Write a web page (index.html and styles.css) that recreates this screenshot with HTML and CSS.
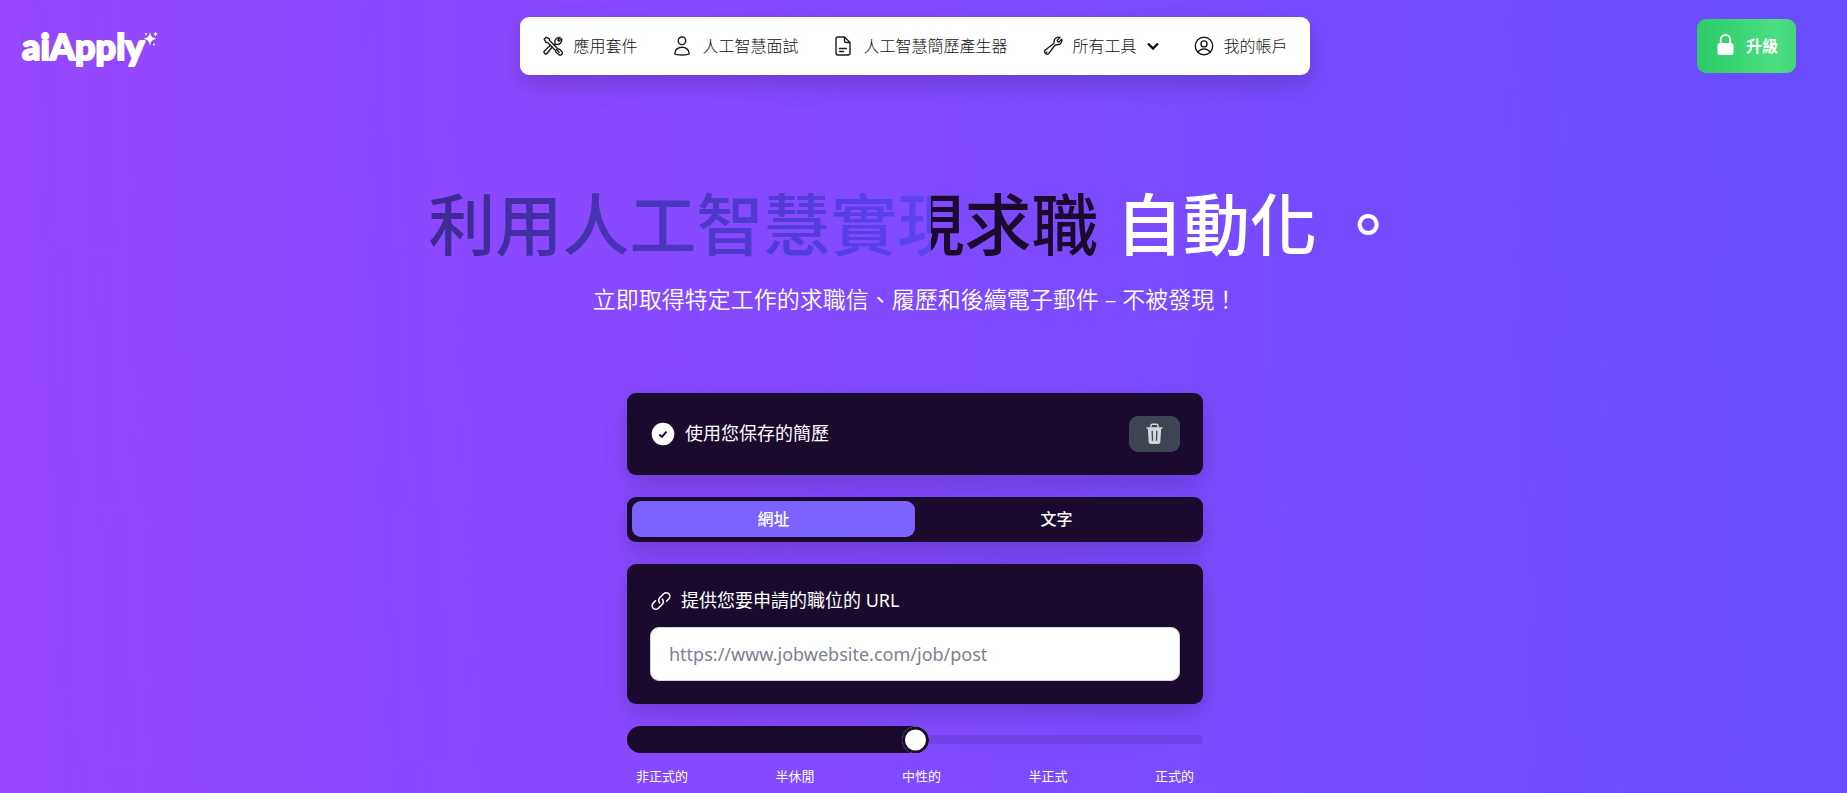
FILE: index.html
```html
<!DOCTYPE html>
<html lang="zh-Hant">
<head>
<meta charset="utf-8">
<meta name="viewport" content="width=device-width, initial-scale=1">
<title>aiApply</title>
<link rel="stylesheet" href="styles.css">
</head>
<body>
<div class="page">
  <header class="topbar">
    <a class="logo" href="#" aria-label="aiApply">
      <svg width="140" height="54" viewBox="0 0 140 54">
        <text class="logo-text" x="2" y="41">aiApply</text>
        <g fill="#fff">
          <path d="M130 13c.8 4.200 2 5.600 6.500 6.700-4.500 1.100-5.700 2.600-6.500 7.300-.8-4.700-2-6.200-6.500-7.300 4.500-1.100 5.700-2.500 6.500-6.700z"/>
          <path d="M135.500 12.500l.8 1.700 1.700.8-1.700.8-.8 1.700-.8-1.700-1.700-.8 1.700-.8z"/>
          <circle cx="126" cy="15" r="1"/><circle cx="134" cy="25.500" r="1"/>
        </g>
      </svg>
    </a>
    <nav class="nav">
      <a class="nav-item" href="#">
        <svg class="icon" viewBox="0 0 20 20"><path d="M1.200 3.200 3.200 1.200 6.300 2.800 6.600 4.600 15 13l1.700.2 2 2.300a1.900 1.900 0 0 1-2.900 2.900l-3-2.200-.3-1.700L4.600 6.600l-1.800-.4z"/><path d="M11.200 8.800 12.200 7.600a4.400 4.400 0 0 1 5-6L14.800 4l1.200 1.300 2.500-2.500a4.400 4.400 0 0 1-6 5.300L11.300 9M9 11.200l-5.300 6.600a2 2 0 0 1-2.400-2.900L7.400 9.200M13.500 13.500l2.700 2.700"/></svg>
        <span>應用套件</span>
      </a>
      <a class="nav-item" href="#">
        <svg class="icon" viewBox="0 0 20 20"><circle cx="10" cy="4.800" r="3.800"/><path d="M2.800 17.300C3.400 13.300 6.400 11.200 10 11.200s6.600 2.100 7.200 6.100c0 .7-.3 1-1 1.100-4 .8-8.400.8-12.400 0-.7-.1-1-.4-1-1.100z"/></svg>
        <span>人工智慧面試</span>
      </a>
      <a class="nav-item" href="#">
        <svg class="icon" viewBox="0 0 20 20"><path d="M11.500 1H5a2 2 0 0 0-2 2v14a2 2 0 0 0 2 2h10a2 2 0 0 0 2-2V6.500zV5a1.500 1.500 0 0 0 1.500 1.500H17M6.500 12.500h7M6.500 15.500h4"/></svg>
        <span>人工智慧簡歷產生器</span>
      </a>
      <a class="nav-item" href="#">
        <svg class="icon" viewBox="0 0 20 20"><path d="M17 1.400 14.200 4.200l.3 1.500 1.500.3 2.700-2.800c.8 2.800-1.100 5.900-4.700 5.500-1-.1-1.500.1-2 .6l-6.600 8.600a2.600 2.600 0 0 1-3.400-3.600l8.500-6.500c.6-.6.7-1.100.6-1.900C10.800 2.600 14 .4 17 1.400zM3.600 16.200v.2"/></svg>
        <span>所有工具</span>
        <svg class="chevron" viewBox="0 0 12 8"><path d="M1 1.500l5 5 5-5"/></svg>
      </a>
      <a class="nav-item" href="#">
        <svg class="icon" viewBox="0 0 20 20"><circle cx="10" cy="10" r="8.700"/><circle cx="10" cy="7.900" r="3"/><path d="M4.200 16.300c1-2.200 3-3.300 5.800-3.300s4.800 1.100 5.800 3.300"/></svg>
        <span>我的帳戶</span>
      </a>
    </nav>
    <button class="upgrade" type="button">
      <svg width="17" height="22" viewBox="0 0 17 22"><path d="M3.700 9V5.600a4.700 4.700 0 0 1 9.400 0V9" fill="none" stroke="#fff" stroke-width="1.800"/><rect x=".5" y="9" width="16" height="12" rx="2.500" fill="#fff"/></svg>
      <span>升級</span>
    </button>
  </header>

  <main class="main">
    <h1 class="title"><span class="title-shade">利用人工智慧實現求職</span> 自動化 。</h1>
    <p class="subtitle">立即取得特定工作的求職信、履歷和後續電子郵件 – 不被發現！</p>

    <form class="form">
      <section class="card saved">
        <svg width="24" height="24" viewBox="0 0 24 24"><circle cx="12" cy="12" r="11.300" fill="#fff"/><path d="M8.400 12.500l2.500 2.400 4.600-5.300" fill="none" stroke="#1a0b2e" stroke-width="2"/></svg>
        <span class="saved-text">使用您保存的簡歷</span>
        <button class="trash" type="button" aria-label="刪除">
          <svg width="17" height="22" viewBox="0 0 17 22"><path d="M5 4.500V2.800C5 1.900 5.600 1.300 6.500 1.300h4c.9 0 1.500.6 1.500 1.500v1.700" fill="none" stroke="#d3d5d8" stroke-width="1.500"/><path d="M.5 4.200h16v1.600h-1.300l-.9 13.400a2 2 0 0 1-2 1.800H4.700a2 2 0 0 1-2-1.800L1.800 5.800H.5z" fill="#d3d5d8"/><path d="M6.200 7.800l.3 10M10.800 7.800l-.3 10" stroke="#3e4451" stroke-width="1.300"/></svg>
        </button>
      </section>

      <div class="tabs" role="tablist">
        <button class="tab tab-active" type="button" role="tab" aria-selected="true">網址</button>
        <button class="tab" type="button" role="tab" aria-selected="false">文字</button>
      </div>

      <section class="card">
        <label class="field-label" for="job-url">
          <svg width="22" height="22" viewBox="0 0 22 22"><path d="M9.700 12.900a3.600 3.600 0 0 1 0-5.100l4-4a3.600 3.600 0 0 1 5.100 5.100l-2.300 2.300M12.300 9.100a3.600 3.600 0 0 1 0 5.100l-4 4a3.600 3.600 0 0 1-5.100-5.100l2.300-2.300" fill="none" stroke="#fff" stroke-width="1.500" stroke-linecap="round"/></svg>
          <span>提供您要申請的職位的 URL</span>
        </label>
        <input class="field" id="job-url" type="url" placeholder="https://www.jobwebsite.com/job/post">
      </section>

      <div class="tone">
        <input class="range" type="range" min="0" max="100" step="25" value="50" aria-label="語氣">
        <div class="ticks">
          <span>非正式的</span><span>半休閒</span><span>中性的</span><span>半正式</span><span>正式的</span>
        </div>
      </div>
    </form>
  </main>
</div>
</body>
</html>
```
FILE: styles.css
```css
*,
*::before,
*::after {
  box-sizing: border-box;
}

:root {
  --ink: #1a0b2e;
  --shadow: 0 10px 24px rgba(26, 11, 46, 0.2);
}

html {
  background: linear-gradient(88deg, #9747ff, #694dff);
  min-height: 100%;
}

body {
  margin: 0;
  color: #fff;
  font-family: "Noto Sans", "Noto Sans CJK TC", sans-serif;
  font-size: 18px;
  overflow-x: hidden;
}

button,
input {
  font: inherit;
  color: inherit;
  border: 0;
  margin: 0;
}

a {
  color: inherit;
  text-decoration: none;
}

.page {
  padding-right: 17px;
}

.topbar {
  display: grid;
  grid-template-columns: 1fr auto 1fr;
  align-items: center;
  padding: 17px 20px 0;
}

.logo {
  display: block;
  height: 54px;
}

.logo-text {
  font-family: Lato, sans-serif;
  font-weight: 900;
  font-size: 36px;
  fill: #fff;
  stroke: #fff;
  stroke-width: 2px;
  stroke-linejoin: round;
}

.nav {
  display: flex;
  align-items: center;
  justify-content: space-between;
  height: 58px;
  gap: 35px;
  padding: 0 22px 0 23px;
  border-radius: 9px;
  background: #fff;
  color: #111;
  box-shadow: var(--shadow);
}

.nav-item {
  display: flex;
  align-items: center;
  gap: 10px;
  font-size: 16px;
  font-weight: 300;
  line-height: 24px;
}

.icon {
  width: 20px;
  height: 20px;
  fill: none;
  stroke: #1c1c1c;
  stroke-width: 1.4;
  stroke-linecap: round;
  stroke-linejoin: round;
}

.chevron {
  width: 12px;
  height: 8px;
  fill: none;
  stroke: #111;
  stroke-width: 2.4;
}

.upgrade {
  justify-self: end;
  display: flex;
  align-items: center;
  gap: 12px;
  height: 54px;
  margin-right: 14px;
  padding: 0 18px 2px 20px;
  border-radius: 9px;
  background: linear-gradient(90deg, #2dcb67, #4ade80 80%, #43d477);
  font-size: 16px;
  font-weight: 700;
}

.main {
  display: flex;
  flex-direction: column;
  align-items: center;
}

.title {
  margin: 99px 0 0;
  font-size: 67px;
  font-weight: 500;
  line-height: 100px;
  white-space: nowrap;
}

.title-shade {
  color: transparent;
  background: linear-gradient(90deg, #3d2a91, #5b43f2 75%, var(--ink) 75%);
  background-clip: text;
  -webkit-background-clip: text;
}

.subtitle {
  margin: 7px 0 0;
  font-size: 23px;
  font-weight: 350;
  line-height: 36px;
}

.form {
  display: flex;
  flex-direction: column;
  gap: 22px;
  width: 100%;
  max-width: 576px;
  margin-top: 76px;
}

.card {
  padding: 23px;
  border-radius: 9px;
  background: var(--ink);
  box-shadow: var(--shadow);
}

.saved {
  display: flex;
  align-items: center;
  gap: 10px;
  padding-left: 24px;
}

.saved-text {
  flex: 1;
  line-height: 27px;
  padding-bottom: 2px;
}

.trash {
  display: flex;
  align-items: center;
  justify-content: center;
  width: 51px;
  height: 36px;
  border-radius: 9px;
  background: #3e4451;
}

.tabs {
  display: flex;
  padding: 4px 5px 5px;
  border-radius: 9px;
  background: var(--ink);
  box-shadow: var(--shadow);
}

.tab {
  flex: 1;
  height: 36px;
  padding: 0 0 3px;
  border-radius: 9px;
  background: transparent;
  font-size: 16px;
  font-weight: 500;
}

.tab-active {
  background: #7c62ff;
}

.field-label {
  display: flex;
  align-items: center;
  gap: 9px;
  line-height: 27px;
  margin-bottom: 13px;
}

.field {
  display: block;
  width: 100%;
  height: 54px;
  padding: 0 18px;
  border: 1px solid #d1d5db;
  border-radius: 9px;
  background: #fff;
  color: #111;
}

.field::placeholder {
  color: #7b8190;
}

.range {
  appearance: none;
  -webkit-appearance: none;
  display: block;
  width: 100%;
  height: 27px;
  overflow: hidden;
  border-radius: 27px;
  background: transparent;
}

.range::-webkit-slider-runnable-track {
  height: 9px;
  border-radius: 9px;
  background: rgba(26, 11, 46, 0.12);
}

.range::-webkit-slider-thumb {
  -webkit-appearance: none;
  position: relative;
  top: 50%;
  transform: translateY(-50%);
  width: 27px;
  height: 27px;
  border-radius: 27px;
  background: #fff;
  box-shadow: 0 0 0 3px var(--ink) inset, -1811px 0 0 1800px var(--ink);
}

.ticks {
  display: flex;
  justify-content: space-between;
  padding: 13px 9px 6px;
  font-size: 13px;
  line-height: 20px;
}
```
